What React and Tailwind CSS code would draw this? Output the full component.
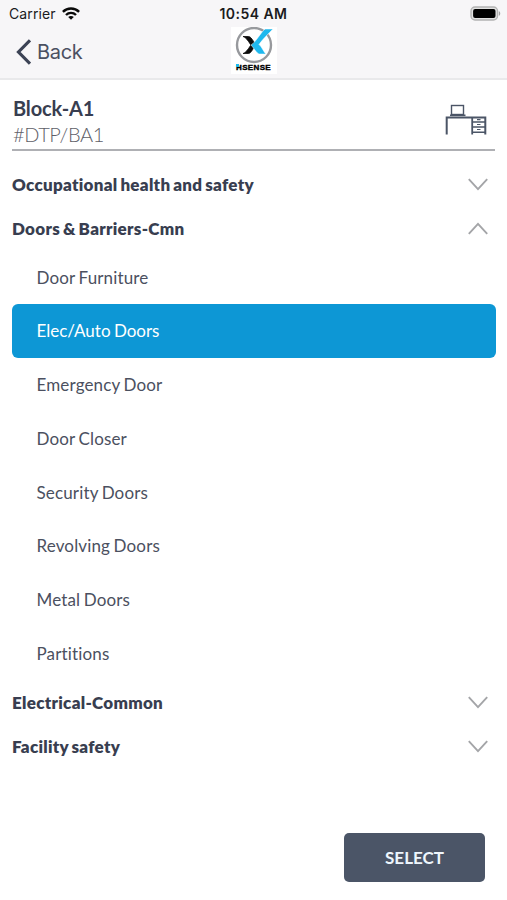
function WifiIcon() {
  return (
    <svg className="h-[13px] w-[18px]" viewBox="0 0 18 13" fill="none" stroke="#0a0a0a" strokeWidth="2.4">
      <path d="M0.9 4.9C5.4 0.4 12.6 0.4 17.1 4.9" />
      <path d="M4 8C6.8 5.2 11.2 5.2 14 8" />
      <path d="M9 12.8L6.2 10C7.8 8.5 10.2 8.5 11.8 10Z" fill="#0a0a0a" stroke="none" />
    </svg>
  );
}

function BatteryIcon() {
  return (
    <svg className="h-[15px] w-[32px]" viewBox="0 0 32 15">
      <rect x="1" y="1" width="26.5" height="13" rx="4" fill="#e2e2e2" stroke="#b3b3b3" strokeWidth="1.4" />
      <rect x="3.1" y="3" width="22.4" height="9" rx="2" fill="#000" />
      <path d="M28.8 5.2C30.7 5.7 30.7 9.3 28.8 9.8Z" fill="#a3a3a3" />
    </svg>
  );
}

function Logo() {
  return (
    <div className="flex h-[47px] w-[46px] flex-col items-center bg-white">
      <svg className="h-[37px] w-[40px] shrink-0" viewBox="0 0 40 37">
        <circle cx="20" cy="18" r="17" fill="#fff" stroke="#97999d" strokeWidth="2.4" />
        <path d="M9 9.5H14.5C17 9.5 19 14 22 17.5C19 21.5 17 26.5 14.5 26.5H9C12 26 15 20.5 17 18C15 15.5 12 10 9 9.5Z" fill="#0b0b0b" stroke="#0b0b0b" strokeWidth="0.8" />
        <path d="M31 2H39C34.5 6.5 28 13 25 17.5C28 20 30 25.5 32 27H25C22.5 26 20.5 22 17 18C22 15 26 6.5 31 2Z" fill="#1eb8ee" stroke="#fff" strokeWidth="0.5" />
      </svg>
      <div className="relative whitespace-nowrap font-['Liberation_Sans',sans-serif] text-[8px] leading-[8px] font-bold tracking-[0.35px] text-black [-webkit-text-stroke:0.4px]">
        HSENSE
        <span className="absolute top-0 left-0 h-[3px] w-[3px] bg-[#1eb8ee]" />
      </div>
    </div>
  );
}

function DeskIcon() {
  return (
    <svg className="h-[32px] w-[42px]" viewBox="0 0 42 32" fill="none" stroke="#4b5566">
      <rect x="6.5" y="1.5" width="12" height="9" strokeWidth="1.4" />
      <path d="M5 11.3H20.5" strokeWidth="1.6" />
      <path d="M1.7 30.5V13.5H40.3V30.5" strokeWidth="2" />
      <path d="M27.2 13.5V30.5" strokeWidth="1.8" />
      <path d="M27.2 18H40M27.2 23H40M27.2 28.3H40" strokeWidth="1.4" />
      <path d="M32 15.6H35.5M32 20.5H35.5M32 25.5H35.5" strokeWidth="1.2" />
    </svg>
  );
}

function Chevron({ up }) {
  return (
    <svg className="h-[13px] w-[20px]" viewBox="0 0 20 13" fill="none" stroke="#a4a5a8" strokeWidth="1.9">
      <path d={up ? "M0.8 11.8L10 1.8L19.2 11.8" : "M0.8 1.2L10 11.2L19.2 1.2"} />
    </svg>
  );
}

function Section({ title, open, children }) {
  return (
    <section>
      <button className="flex h-[44px] w-full items-center justify-between pr-[8px] text-[17px] font-extrabold tracking-[0.28px] text-[#383e50] [word-spacing:-1.3px]">
        <span>{title}</span>
        <Chevron up={open} />
      </button>
      {children}
    </section>
  );
}

const doors = [
  "Door Furniture",
  "Elec/Auto Doors",
  "Emergency Door",
  "Door Closer",
  "Security Doors",
  "Revolving Doors",
  "Metal Doors",
  "Partitions",
];

export default function App() {
  return (
    <div className="flex h-[900px] w-[507px] flex-col overflow-hidden bg-white font-[Lato,sans-serif] text-[#4b5060] [font-variant-ligatures:none]">
      <header className="h-[80px] shrink-0 border-b-2 border-[#e9e9eb] bg-[#f7f6f8]">
        <div className="grid h-[27px] grid-cols-3 items-center pl-[9px] pr-[5px] font-[Inter,sans-serif] text-[#1b1b1d]">
          <div className="flex items-center gap-[6px] text-[14px] tracking-[0.1px]">
            Carrier <WifiIcon />
          </div>
          <div className="-ml-[4px] text-center text-[14px] font-semibold tracking-[0.45px] whitespace-nowrap">10:54 AM</div>
          <div className="flex justify-end"><BatteryIcon /></div>
        </div>
        <div className="grid h-[50px] grid-cols-3">
          <button className="flex h-[50px] items-center gap-[6px] pl-[16px] font-[Inter,sans-serif] text-[20px] tracking-[-0.3px] text-[#4b5061]">
            <svg className="h-[26px] w-[15px]" viewBox="0 0 15 26" fill="none" stroke="#3c4355" strokeWidth="3.2">
              <path d="M14 1.3L2.5 13L14 24.7" />
            </svg>
            Back
          </button>
          <div className="flex justify-center"><Logo /></div>
        </div>
      </header>

      <main className="flex grow flex-col pl-[12px] pr-[11px]">
        <div className="mr-px flex h-[71px] items-start justify-between border-b-2 border-[#afb0b4] pr-[8px]">
          <div className="pt-[15px] pl-[1px]">
            <h1 className="text-[20px] leading-[26px] font-bold tracking-[-0.15px] text-[#383e50]">Block-A1</h1>
            <p className="text-[20px] leading-[26px] font-light tracking-[-0.4px] text-[#5e6068]">#DTP/BA1</p>
          </div>
          <div className="pt-[24px]"><DeskIcon /></div>
        </div>

        <div className="pt-[11.5px]">
          <Section title="Occupational health and safety" />
          <Section title="Doors & Barriers-Cmn" open>
            <ul className="text-[17px] tracking-[0.15px] [word-spacing:-1px]">
              {doors.map((name) => (
                <li
                  key={name}
                  className={
                    name === "Elec/Auto Doors"
                      ? "flex h-[53.75px] items-center rounded-[6px] bg-[#0d97d5] pl-[24.5px] tracking-[0px] text-white"
                      : "flex h-[53.75px] items-center pl-[24.5px]"
                  }
                >
                  {name}
                </li>
              ))}
            </ul>
          </Section>
          <Section title="Electrical-Common" />
          <Section title="Facility safety" />
        </div>

        <button className="mt-auto mr-[11px] mb-[18px] h-[49px] w-[141px] self-end rounded-[5px] bg-[#4b5567] text-[17px] font-bold text-[#eef6fd]">
          SELECT
        </button>
      </main>
    </div>
  );
}
